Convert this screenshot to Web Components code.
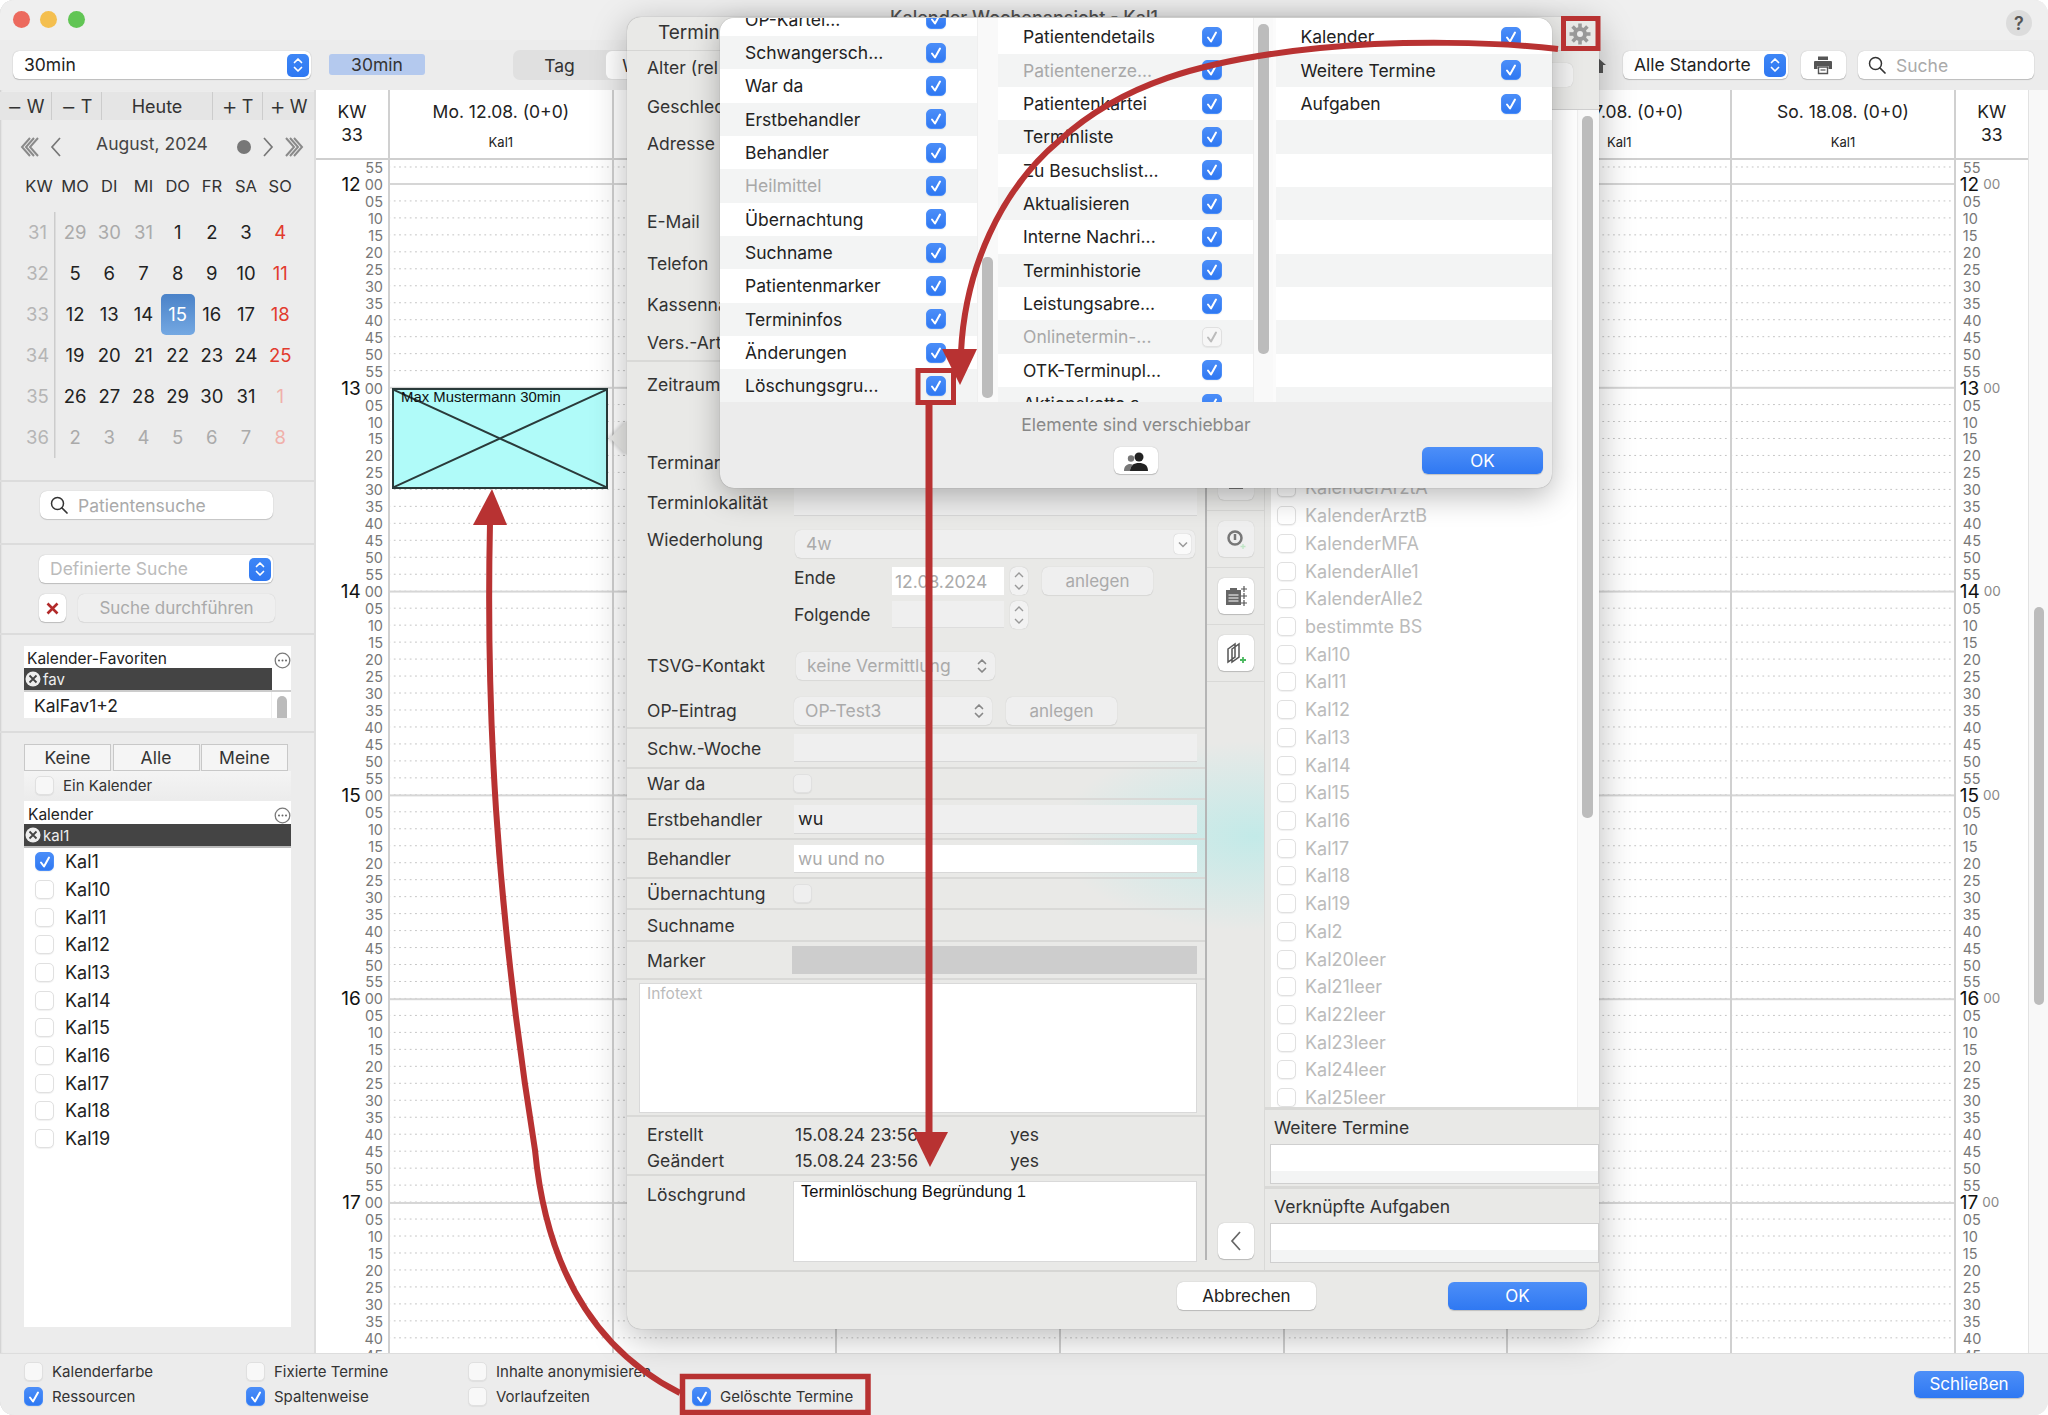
<!DOCTYPE html>
<html lang="de"><head><meta charset="utf-8"><title>Kalender Wochenansicht - Kal1</title>
<style>html,body{margin:0;padding:0;background:#fff}body{font-family:Inter,"Liberation Sans",sans-serif;color:#222;width:2048px;height:1415px;overflow:hidden}</style>
</head><body><app-window></app-window>
<script>
function define(name,css,render){customElements.define(name,class extends HTMLElement{connectedCallback(){if(this.shadowRoot)return;const r=this.attachShadow({mode:'open'});r.innerHTML='<style>'+css+'</style>'+render(this)}})}
const tick=c=>`<svg width="14" height="14" viewBox="0 0 14 14"><path d="M3 7.5 6 11.5 11 2.5" fill="none" stroke="${c}" stroke-width="2" stroke-linecap="round" stroke-linejoin="round"/></svg>`;
const stepperIcon=(c)=>`<svg width="12" height="18" viewBox="0 0 12 18"><path d="M2.5 6.5 6 3l3.5 3.5M2.5 11.5 6 15l3.5-3.5" fill="none" stroke="${c}" stroke-width="1.7" stroke-linecap="round" stroke-linejoin="round"/></svg>`;
const mag=`<svg width="20" height="20" viewBox="0 0 20 20"><circle cx="8.5" cy="8.5" r="6" fill="none" stroke="#333" stroke-width="1.5"/><path d="M13 13l5 5" stroke="#333" stroke-width="1.7" stroke-linecap="round"/></svg>`;
const ell=`<svg width="17" height="17" viewBox="0 0 17 17" style="align-self:flex-start;margin-top:6px"><circle cx="8.5" cy="8.5" r="7.3" fill="#fff" stroke="#7a7a7a" stroke-width="1.3"/><circle cx="5" cy="8.5" r="1" fill="#666"/><circle cx="8.5" cy="8.5" r="1" fill="#666"/><circle cx="12" cy="8.5" r="1" fill="#666"/></svg>`;
const xc=`<svg width="16" height="16" viewBox="0 0 16 16"><circle cx="8" cy="8" r="7.5" fill="#eee"/><path d="M4.500 4.500l7 7M11.500 4.500l-7 7" stroke="#444" stroke-width="1.8"/></svg>`;

define('ui-check',`:host{display:inline-flex;align-items:center;gap:var(--gap,11px);font-size:var(--fs,18px);color:inherit}
.b{width:var(--s,19px);height:var(--s,19px);box-sizing:border-box;border-radius:5px;background:var(--cb,#fff);border:1px solid #e0e0e0;box-shadow:0 1px 1px rgba(0,0,0,.06);flex:none;display:flex;align-items:center;justify-content:center}
:host([on]) .b{background:linear-gradient(#4a8df8,#2f78f2);border-color:#4a8df8}
:host([grey]) .b{background:#f6f6f6}`,h=>`<span class="b" part="box">${h.hasAttribute('on')?tick('#fff'):h.hasAttribute('grey')?tick('#bbb'):''}</span><slot></slot>`);

define('ui-btn',`:host{display:inline-flex;align-items:center;justify-content:center;box-sizing:border-box;height:28px;border-radius:6px;background:#fff;box-shadow:0 0 1px rgba(0,0,0,.3),0 1px 1px rgba(0,0,0,.18);font-size:17px;color:#222;flex:none}
:host([primary]){background:linear-gradient(#4d8ff8,#2f78f2);color:#fff;box-shadow:0 1px 1px rgba(0,0,0,.18)}
:host([dim]){background:#efefef;color:#aaa;box-shadow:0 0 1px rgba(0,0,0,.18),0 1px 1px rgba(0,0,0,.06)}`,()=>`<slot></slot>`);

define('ui-select',`:host{display:flex;align-items:center;box-sizing:border-box;height:28px;border-radius:6px;background:#fff;box-shadow:0 0 1px rgba(0,0,0,.3),0 1px 1px rgba(0,0,0,.18);font-size:17.5px;color:#222;padding:0 2px 0 11px;flex:none}
:host([dim]){background:#efefef;color:#aaa;box-shadow:0 0 1px rgba(0,0,0,.15),0 1px 1px rgba(0,0,0,.06)}
:host([ghost]){background:#fff;color:#bbb}
.t{flex:1;white-space:nowrap;overflow:hidden;padding-bottom:1px}
.s{width:22px;height:23px;border-radius:5px;background:linear-gradient(#3d86f6,#2f78f2);display:flex;align-items:center;justify-content:center}
.g{width:22px;height:23px;display:flex;align-items:center;justify-content:center}
.c{width:17px;height:20px;margin-right:2px;border-radius:4px;background:#fafafa;box-shadow:0 0 1px rgba(0,0,0,.3);display:flex;align-items:center;justify-content:center}`,
h=>{const k=h.getAttribute('kind');return `<span class="t"><slot></slot></span>`+(k==='blue'?`<span class="s">${stepperIcon('#fff')}</span>`:k==='gray'?`<span class="g">${stepperIcon('#888')}</span>`:k==='chev'?`<span class="c"><svg width="10" height="7" viewBox="0 0 10 7"><path d="M1 1.500 5 5.500l4-4" fill="none" stroke="#999" stroke-width="1.500"/></svg></span>`:'')});

define('ui-stepper',`:host{display:flex;flex-direction:column;width:18px;height:28px;border-radius:6px;background:#f2f2f2;box-shadow:0 0 1px rgba(0,0,0,.25);align-items:center;justify-content:center;flex:none}`,
()=>`<svg width="12" height="24" viewBox="0 0 12 24"><path d="M2 8 6 4l4 4M2 16l4 4 4-4" fill="none" stroke="#999" stroke-width="1.4"/></svg>`);

define('title-bar',`:host{display:grid;grid-template-columns:1fr auto 1fr;height:40px;background:#efefef}
.l{display:flex;gap:10.5px;padding:11px 0 0 12.5px}.d{width:17px;height:17px;border-radius:50%}
.tt{font-size:18px;font-weight:500;color:#555;line-height:36px}
.r{display:flex;justify-content:flex-end;padding:10px 16px 0 0}
.q{width:26px;height:26px;border-radius:50%;background:#dcdcdc;color:#555;font-size:18px;font-weight:600;display:flex;align-items:center;justify-content:center}`,
()=>`<div class="l"><span class="d" style="background:#ec6a5e"></span><span class="d" style="background:#f4bf4f"></span><span class="d" style="background:#61c554"></span></div><div class="tt">Kalender Wochenansicht - Kal1</div><div class="r"><span class="q">?</span></div>`);

define('tool-bar',`:host{display:flex;align-items:flex-start;height:50px;box-sizing:border-box;padding:11px 14px 0 13px;background:#ececec}
.chip{margin:3px 0 0 18px;width:96px;height:21px;border-radius:3px;background:#b4c9ee;font-size:17.5px;display:flex;align-items:center;justify-content:center;color:#333}
.seg{margin:-1px 0 0 88px;display:flex;height:30px;border-radius:7px;background:#e0e0e0;width:200px}
.seg span{width:93px;display:flex;align-items:center;justify-content:center;font-size:17.5px;color:#333}
.seg .w{background:#fff;border-radius:6px;margin:1px 0;width:90px}
.right{margin-left:auto;display:flex;align-items:flex-start;gap:12.5px}
.search{width:176px;height:28px;border-radius:6px;background:#fff;box-shadow:0 0 1px rgba(0,0,0,.3),0 1px 1px rgba(0,0,0,.18);display:flex;align-items:center;gap:9px;padding-left:9px;box-sizing:border-box;font-size:17.5px;color:#aaa}
.ic{width:45px;height:28px;border-radius:6px;background:#fff;box-shadow:0 0 1px rgba(0,0,0,.3),0 1px 1px rgba(0,0,0,.18);display:flex;align-items:center;justify-content:center}
.home{width:28px;height:28px;display:flex;align-items:center;justify-content:center}`,
()=>`<ui-select kind="blue" style="width:298px">30min</ui-select><div class="chip">30min</div><div class="seg"><span>Tag</span><span class="w">Woche</span></div>
<div class="right"><span class="home"><svg width="22" height="22" viewBox="0 0 22 22"><path d="M11 3 2 11h3v8h4v-5h4v5h4v-8h3z" fill="#555"/></svg></span>
<ui-select kind="blue" style="width:165px">Alle Standorte</ui-select>
<span class="ic"><svg width="20" height="20" viewBox="0 0 20 20"><path d="M5 1.500h10V5H5z" fill="#555"/><path d="M2 6h16a1 1 0 0 1 1 1v7h-3.500v-3h-11v3H1V7a1 1 0 0 1 1-1z" fill="#555"/><path d="M5.500 12h9v6.500h-9z" fill="#fff" stroke="#555" stroke-width="1.400"/><path d="M7.500 15h5" stroke="#555" stroke-width="1.200"/></svg></span>
<span class="search">${mag}<span>Suche</span></span></div>`);

define('mini-calendar',`:host{display:block}
.nav{display:flex;height:28px;margin-top:2px;background:#e5e5e5;font-size:18px;color:#333}
.nav span{display:flex;align-items:center;justify-content:center;gap:4px;border-right:1.5px solid #ccc;box-sizing:border-box}
.nav b{font-weight:300;font-size:25px;line-height:24px}
.mon{display:flex;height:45px;box-sizing:border-box;padding-top:9px;align-items:center}
.mon svg{display:block}
.mt{width:154px;padding-left:8px;text-align:center;font-size:17.5px;color:#444;margin-top:-8px}
.g{display:grid;grid-template-columns:38px repeat(7,34.2px);grid-template-rows:46.5px repeat(6,41px);margin-left:20px;width:278px;font-size:18.5px;text-align:center;
background:linear-gradient(#ccc,#ccc) 34px 47px/1.5px 246px no-repeat}
.g>span{display:flex;align-items:center;justify-content:center}
.hs{height:42px;grid-column:1/-1;display:grid;grid-template-columns:38px repeat(7,34.2px)}
.hs span{display:flex;align-items:center;justify-content:center;font-size:16.5px;color:#333}
.k{color:#b5b5b5;padding-right:3px}.o{color:#aaa}.s{color:#e23b2e}.so{color:#f0b0aa}
.t{background:linear-gradient(#4a82c8,#74a8e2);color:#fff;border-radius:5px}`,
()=>{const w=[['31',29,30,31,1,2,3,4],['32',5,6,7,8,9,10,11],['33',12,13,14,15,16,17,18],['34',19,20,21,22,23,24,25],['35',26,27,28,29,30,31,1],['36',2,3,4,5,6,7,8]];
let rows='';w.forEach((r,i)=>{r.forEach((d,j)=>{let c='';if(j===0)c='k';else if(i===0&&j<4||i===5&&j<7)c='o';else if(i===4&&j===7||i===5&&j===7)c='so';else if(j===7)c='s';if(d===15)c='t';rows+=`<span class="${c}">${d}</span>`})});
const dbl=d=>`<svg width="24" height="24" viewBox="0 0 24 24"><g fill="none" stroke="#8a8a8a" stroke-width="2">${d==='l'?'<path d="M11 3 3 12l8 9M15 3 7 12l8 9M19 3l-8 9 8 9"/>':'<path d="M5 3l8 9-8 9M9 3l8 9-8 9M13 3l8 9-8 9"/>'}</g></svg>`;
return `<div class="nav"><span style="width:52px"><b>−</b>W</span><span style="width:50px"><b>−</b>T</span><span style="width:111px">Heute</span><span style="width:50px"><b>+</b>T</span><span style="width:51px;border:0"><b>+</b>W</span></div>
<div class="mon"><span style="width:19px"></span>${dbl('l')}<span style="width:2px"></span><svg width="22" height="24" viewBox="0 0 22 24"><path d="M15 3l-8 9 8 9" fill="none" stroke="#777" stroke-width="1.7"/></svg><div class="mt">August, 2024</div><svg width="14" height="14" viewBox="0 0 14 14" style="margin-left:8px"><circle cx="7" cy="7" r="7" fill="#777"/></svg><span style="width:7px"></span><svg width="20" height="24" viewBox="0 0 20 24"><path d="M6 3l8 9-8 9" fill="none" stroke="#777" stroke-width="1.7"/></svg><span style="width:3px"></span>${dbl('r')}</div>
<div class="g"><div class="hs"><span>KW</span><span>MO</span><span>DI</span><span>MI</span><span>DO</span><span>FR</span><span>SA</span><span>SO</span></div>${rows}</div>`});

define('side-bar',`:host{display:block;width:316px;flex:none;box-sizing:border-box;border-right:2px solid #ddd;background:#ececec;box-shadow:inset 2px 0 2px -1px #ccc;overflow:hidden}
.sec{border-bottom:2px solid #dcdcdc}
.srch{margin:0 0 0 40px;width:233px;height:28px;border-radius:7px;background:#fff;box-shadow:0 0 1px rgba(0,0,0,.25),0 1px 1px rgba(0,0,0,.15);display:flex;align-items:center;gap:9px;padding-left:9px;box-sizing:border-box;color:#aaa;font-size:17.5px}
.row{display:flex;gap:12px;margin:11px 0 0 39px}
.box{margin:0 0 0 24px;width:267px;background:#fff;font-size:15.5px;position:relative}
.lbl{height:22px;display:flex;justify-content:space-between;align-items:flex-end;padding:0 0 0 3px;color:#222;line-height:19px}
.bar{height:22px;background:#444;color:#eee;display:flex;align-items:center;gap:2px;font-size:15px;padding-left:1px;box-sizing:border-box}
.btns{display:flex;gap:1.5px;margin:0 0 0 24px}
.btns span{width:87px;height:27px;box-sizing:border-box;border:1.5px solid #c8c8c8;background:#f5f5f5;display:flex;align-items:center;justify-content:center;font-size:17.5px;color:#333}
.ein{margin-left:24px;width:267px;height:28px;box-sizing:border-box;padding-left:11px;display:flex;align-items:center;background:linear-gradient(#f4f4f4,#ececec);color:#333}
.items{display:flex;flex-direction:column;padding:0 0 0 11px}
.items ui-check{height:27.67px}`,
()=>{const items=['Kal1','Kal10','Kal11','Kal12','Kal13','Kal14','Kal15','Kal16','Kal17','Kal18','Kal19'].map((k,i)=>`<ui-check ${i===0?'on':''}>${k}</ui-check>`).join('');
return `<div class="sec" style="height:390px;box-sizing:border-box;"><mini-calendar></mini-calendar></div>
<div class="sec" style="height:63px;box-sizing:border-box;padding-top:9px"><div class="srch">${mag}<span>Patientensuche</span></div></div>
<div class="sec" style="height:90px;box-sizing:border-box;padding-top:10px"><ui-select ghost kind="blue" style="margin-left:39px;width:234px">Definierte Suche</ui-select>
<div class="row"><ui-btn style="width:27px"><svg width="15" height="15" viewBox="0 0 15 15"><path d="M2.500 2.500l10 10M12.500 2.500l-10 10" stroke="#b22a2a" stroke-width="2.600"/></svg></ui-btn><ui-btn dim style="width:197px">Suche durchführen</ui-btn></div></div>
<div class="sec" style="height:98px;box-sizing:border-box;padding-top:11px"><div class="box">
<div class="lbl"><span>Kalender-Favoriten</span>${ell}</div><div class="bar" style="width:248px">${xc}<span>fav</span></div>
<div style="height:28px;border-top:2px solid #ccc;box-sizing:border-box;display:flex;font-size:17.5px;align-items:center"><span style="flex:1;padding-left:10px;border-right:1px solid #eee;align-self:stretch;display:flex;align-items:center">KalFav1+2</span><span style="width:19px;align-self:stretch;display:flex;justify-content:center;align-items:flex-end"><i style="width:10px;height:22px;border-radius:5px 5px 0 0;background:#bbb"></i></span></div></div></div>
<div style="height:11px"></div>
<div class="btns"><span>Keine</span><span>Alle</span><span>Meine</span></div>
<div class="ein"><ui-check style="--fs:15px;--gap:9px;--cb:#f7f7f7">Ein Kalender</ui-check></div>
<div style="height:2px"></div>
<div class="box" style="height:526px"><div class="lbl" style="height:23px;padding-left:4px"><span>Kalender</span>${ell}</div><div class="bar" style="height:24px;border-bottom:2px solid #bbb">${xc}<span>kal1</span></div><div class="items">${items}</div></div>`});

define('time-col',`:host{display:block;width:72px;flex:none;background:#fff;box-sizing:border-box}
.hd{border-bottom:2px solid #cfcfcf;display:flex;flex-direction:column;align-items:center;justify-content:center;font-size:17.5px;line-height:23px;color:#222;padding-bottom:3px;box-sizing:border-box;height:70px}
.bd{height:1194px;overflow:hidden;margin-top:-1px}
.r{height:16.98px;display:flex;align-items:center;font-size:14.5px;color:#777;justify-content:flex-end;padding-right:5px;line-height:17px}
.r b{font-weight:400;font-size:19px;color:#111;margin-right:4px}
:host([right]) .r{justify-content:flex-start;padding:0 0 0 7px}
:host([right]) .r.h{padding-left:4px}
:host([right]) .r.h span{font-size:13.5px;color:#888}`,
()=>{let s='<div class="r"><span>55</span></div>';for(let h=12;h<19;h++)for(let m=0;m<60;m+=5){const t=String(m).padStart(2,'0');s+=m===0?`<div class="r h"><b>${h}</b><span>${t}</span></div>`:`<div class="r"><span>${t}</span></div>`}
return `<div class="hd"><span>KW</span><span>33</span></div><div class="bd">${s}</div>`});

define('day-col',`:host{display:block;width:223.7px;flex:none;box-sizing:border-box;background:#fff;border-left:2px solid #d0d0d0}
.hd{height:70px;box-sizing:border-box;border-bottom:2px solid #cfcfcf;text-align:center;padding-top:11px}
.t{font-size:17.5px;color:#222;line-height:22px;white-space:nowrap}.k{font-size:13px;color:#222;margin-top:11px;line-height:16px}
.bd{position:relative;height:1194px;margin-top:-1px;
background:linear-gradient(#d6d6d6 2px,transparent 2px) 0 24px/100% 203.8px repeat-y,radial-gradient(circle,#c4c4c4 .7px,transparent 1px) 2px -.5px/5.33px 16.98px repeat}
::slotted(*){position:absolute;left:2px;top:229px}`,
h=>`<div class="hd"><div class="t">${h.getAttribute('label')}</div><div class="k">Kal1</div></div><div class="bd"><slot></slot></div>`);

define('cal-event',`:host{display:block;width:216px;height:101px;box-sizing:border-box;border:2px solid #2a3a3a;background:#b0fbf9;font:14.9px "Liberation Sans",sans-serif;color:#111}
.w{position:relative;width:100%;height:100%}
svg{position:absolute;left:0;top:0;width:100%;height:100%}
.t{position:relative;padding:0 0 0 7px;line-height:15px;white-space:nowrap}`,
()=>`<div class="w"><svg viewBox="0 0 212 97" preserveAspectRatio="none"><path d="M0 0 212 97M212 0 0 97" stroke="#2a3a3a" stroke-width="2"/></svg><div class="t">Max Mustermann 30min</div></div>`);

define('cal-view',`:host{display:flex;flex:1;min-width:0;overflow:hidden;background:#fff}
.sb{flex:1;background:#f8f8f8;border-left:1px solid #e2e2e2;padding:517px 0 0 5px;box-sizing:border-box}
.sb i{display:block;width:10px;height:398px;border-radius:5px;background:#bcbcbc}
.last{width:2px;background:#d0d0d0;flex:none}`,
()=>`<time-col></time-col><day-col label="Mo. 12.08. (0+0)"><cal-event></cal-event></day-col><day-col label="Di. 13.08. (0+0)"></day-col><day-col label="Mi. 14.08. (0+0)"></day-col><day-col label="Do. 15.08. (0+0)"></day-col><day-col label="Fr. 16.08. (0+0)"></day-col><day-col label="Sa. 17.08. (0+0)"></day-col><day-col label="So. 18.08. (0+0)"></day-col><div class="last"></div><time-col right></time-col><div class="sb"><i></i></div>`);

define('bottom-bar',`:host{display:grid;grid-template-columns:222px 222px 224px auto 1fr;grid-template-rows:25px 25px;padding:5px 24px 0 24px;height:62px;box-sizing:border-box;background:#ececec;font-size:15px;color:#333;--fs:15px;--gap:9px;--cb:#f8f8f8;border-top:1px solid #ddd}
ui-check{align-self:center}
.sch{grid-column:5;grid-row:1/3;justify-self:end;align-self:center}`,
()=>`<ui-check>Kalenderfarbe</ui-check><ui-check>Fixierte Termine</ui-check><ui-check>Inhalte anonymisieren</ui-check><span></span>
<ui-btn primary class="sch" style="width:110px;height:27px;font-size:17px;">Schließen</ui-btn>
<ui-check on>Ressourcen</ui-check><ui-check on>Spaltenweise</ui-check><ui-check>Vorlaufzeiten</ui-check><ui-check on>Gelöschte Termine</ui-check>`);

define('form-row',`:host{display:grid;grid-template-columns:147px 1fr;align-items:center;padding-left:20px;box-sizing:border-box;font-size:17.5px;color:#333}
:host([line]){border-bottom:2px solid #d9d9d7}
.l{white-space:nowrap;padding-bottom:var(--lo,0);padding-top:var(--lt,0)}.c{display:flex;align-items:center;min-width:0}`,
h=>`<div class="l">${h.getAttribute('label')||''}</div><div class="c"><slot></slot></div>`);

define('appt-dialog',`:host{position:absolute;left:627px;top:17px;width:972px;height:1312px;z-index:5;font-size:17.5px;color:#333}
.n{position:absolute;left:-12px;top:409px;width:24px;height:24px;background:#e9e9e7;transform:rotate(45deg);box-shadow:-2px 2px 3px rgba(0,0,0,.12)}
.p{position:relative;height:100%;background:#e9e9e7;border-radius:14px;box-shadow:0 0 1px rgba(0,0,0,.4),0 8px 36px rgba(0,0,0,.28);overflow:hidden;display:flex;flex-direction:column}
.title{height:34px;box-sizing:border-box;border-bottom:1.5px solid #d6d6d4;padding-left:31px;font-size:19px;line-height:32px;color:#333;flex:none}
.b{display:flex;flex:1;min-height:0}
.f{width:580px;flex:none;box-sizing:border-box;border-right:2px solid #b5b5b5;height:1209px;background:radial-gradient(ellipse 200px 95px at 627px 785px,rgba(188,234,232,.85),rgba(188,234,232,0))}
.fd{background:#efefef;height:28px;flex:1;margin-right:8px;box-sizing:border-box;border-bottom:1px solid #d8d8d8;display:flex;align-items:center;padding-left:12px;font-size:17.5px}
.w{background:#fff;color:#aaa}
.cb{--s:19px;--cb:#efefef}
.ic{width:58px;flex:none;display:flex;flex-direction:column;align-items:stretch;height:1219px;box-sizing:border-box;border-right:1.5px solid #d9d9d7;background:radial-gradient(ellipse 200px 95px at 47px 785px,rgba(188,234,232,.85),rgba(188,234,232,0))}
.ic div{height:57px;box-sizing:border-box;border-bottom:1.5px solid #d9d9d7;display:flex;align-items:center;justify-content:center}
.r{flex:1;min-width:0;display:flex;flex-direction:column}
.rt{height:59px;box-sizing:border-box;border-bottom:1.5px solid #cfcfcf;flex:none;display:flex;justify-content:flex-end;padding:12px 26px 0 0}
.rt i{width:40px;height:24px;border-radius:6px;background:#f2f2f2;box-shadow:0 0 1px rgba(0,0,0,.2)}
.lst{height:997px;display:flex;flex:none;overflow:hidden;padding-left:6px}
.lc{width:306px;flex:none;background:#fff;padding:364px 0 0 6px;box-sizing:border-box;color:#bbb;display:flex;flex-direction:column;--gap:9px;font-size:18px}
.lc ui-check{height:27.72px;flex:none}
.lb{flex:1;background:#f9f9f9;border-left:1px solid #eee;padding:6px 0 0 4px}
.lb i{display:block;width:11px;height:702px;background:#bcbcbc;border-radius:5px}
.sec{height:79px;box-sizing:border-box;border-top:3px solid #d9d9d7;flex:none}
.sec .t{height:34px;display:flex;align-items:center;padding-left:9px;font-size:17.5px;color:#333}
.sec .tb{height:40px;margin-left:5px;box-sizing:border-box;border:1.5px solid #cfcfcf;background:linear-gradient(#fff 26px,#f3f4f4 26px)}
.ft{height:59px;flex:none;border-top:2px solid #d6d6d4;box-sizing:border-box;display:flex;justify-content:flex-end;gap:132px;padding:10px 12px 0 0}
.ft ui-btn{width:139px}
.txt{margin:0 8px 0 12px;height:130px;background:#fff;border:1.5px solid #d9d9d9;box-sizing:border-box;padding:0 0 0 7px;font-size:15.5px;color:#bbb;line-height:20px}`,
()=>{const list=['KalenderArztA','KalenderArztB','KalenderMFA','KalenderAlle1','KalenderAlle2','bestimmte BS','Kal10','Kal11','Kal12','Kal13','Kal14','Kal15','Kal16','Kal17','Kal18','Kal19','Kal2','Kal20leer','Kal21leer','Kal22leer','Kal23leer','Kal24leer','Kal25leer'].map(k=>`<ui-check>${k}</ui-check>`).join('');
const R=(label,h,content='',extra='')=>`<form-row label="${label}" style="height:${h}px;${extra}">${content}</form-row>`;
const S=h=>`<div style="height:${h}px"></div>`;
const L=(label,h,content='',extra='')=>`<form-row line label="${label}" style="height:${h}px;${extra}">${content}</form-row>`;
const inp=(t,cl='',st='')=>`<span class="fd ${cl}" style="${st}">${t}</span>`;
return `<div class="n"></div><div class="p"><div class="title">Termin</div><div class="b"><div class="f">
${R('Alter (rel',33)}${R('Geschlecht',44)}${R('Adresse',30)}${S(42)}${R('E-Mail',42)}${R('Telefon',42)}${R('Kassenname',40)}${L('Vers.-Art',38,'')}
${R('Zeitraum',44)}${S(41)}${R('Terminart',30)}${S(10)}
${R('Terminlokalität',30,inp(''))}${S(8)}
${R('Wiederholung',38,`<ui-select dim kind="chev" style="width:400px;margin-left:1px">4w</ui-select>`,'--lo:10px')}
${R('',34,`<span style="width:98px;padding-bottom:6px">Ende</span><span style="width:112px;height:28px;background:#fff;color:#aaa;display:flex;align-items:center;padding-left:3px;box-sizing:border-box;margin-top:2px">12.08.2024</span><ui-stepper style="margin:2px 0 0 6px"></ui-stepper><ui-btn dim style="width:111px;margin:2px 0 0 14px">anlegen</ui-btn>`)}
${R('',35,`<span style="width:98px">Folgende</span><span style="width:112px;height:27px;background:#efefef;border-bottom:1px solid #ddd;box-sizing:border-box"></span><ui-stepper style="margin:0 0 0 6px"></ui-stepper>`)}
${S(19)}${R('TSVG-Kontakt',29,`<ui-select dim kind="gray" style="width:199px;margin-left:2px">keine Vermittlung</ui-select>`)}${S(16)}
${R('OP-Eintrag',29,`<ui-select dim kind="gray" style="width:198px;">OP-Test3</ui-select><ui-btn dim style="width:111px;margin-left:14px">anlegen</ui-btn>`)}${S(2)}
<div style="height:2px;background:#d9d9d7"></div>
${L('Schw.-Woche',40,inp('','',''))}
${L('War da',31,`<ui-check class="cb" style="margin-left:-1px"></ui-check>`)}
${L('Erstbehandler',40,inp('wu','','color:#222;font-size:18px;height:29px;padding-left:4px'))}
${L('Behandler',39,inp('wu und no','w','height:28px;padding-left:4px'))}
${L('Übernachtung',31,`<ui-check class="cb" style="margin-left:-1px"></ui-check>`)}
${L('Suchname',32)}
${L('Marker',38,`<span style="flex:1;height:28px;background:#cdcdcd;margin:0 8px 0 -2px"></span>`)}
<div style="height:137px;box-sizing:border-box;border-bottom:2px solid #d9d9d7;padding-top:3px"><div class="txt">Infotext</div></div>
<div style="height:59px;box-sizing:border-box;border-bottom:2px solid #d9d9d7;padding-top:4px">
${R('Erstellt',26,`<span style="width:215px;margin-left:1px">15.08.24 23:56</span><span>yes</span>`)}${R('Geändert',26,`<span style="width:215px;margin-left:1px">15.08.24 23:56</span><span>yes</span>`)}</div>
<form-row label="Löschgrund" style="height:86px;align-items:start;padding-top:5px;--lt:3px"><span style="flex:1;height:81px;margin:0 8px 0 -1px;background:#fff;border:1.5px solid #d9d9d9;box-sizing:border-box;padding-left:7px;font:16.6px/20px 'Liberation Sans',sans-serif;color:#111">Terminlöschung Begründung 1</span></form-row>
</div>
<div class="ic">
<div style="height:403px"></div>
<div><ui-btn dim style="width:36px;height:36px"><svg width="22" height="22" viewBox="0 0 22 22"><rect x="4" y="4" width="14" height="14" fill="#777"/></svg></ui-btn></div>
<div><ui-btn dim style="width:36px;height:36px"><svg width="24" height="24" viewBox="0 0 24 24"><circle cx="11" cy="11" r="6.500" fill="none" stroke="#777" stroke-width="2.500"/><path d="M11 7v6" stroke="#777" stroke-width="2.500"/><path d="M19 17v5M16.500 19.500h5" stroke="#bfe5c5" stroke-width="1.300"/></svg></ui-btn></div>
<div><ui-btn style="width:36px;height:36px"><svg width="24" height="24" viewBox="0 0 24 24"><rect x="2" y="6" width="15" height="15" fill="#666"/><rect x="6" y="4" width="7" height="3" fill="#666"/><path d="M4.500 11h10M4.500 14h10M4.500 17h10" stroke="#fff" stroke-width="1"/><path d="M20 2v6M17 5h6M20 9v6M17 12h6M20 16v6M17 19h6" stroke="#555" stroke-width="1.200"/></svg></ui-btn></div>
<div><ui-btn style="width:36px;height:36px"><svg width="24" height="24" viewBox="0 0 24 24"><path d="M4 8 11 3v13l-7 5zM8 8l7-5v13l-7 5z" fill="#fff" stroke="#555" stroke-width="1.500"/><path d="M19 16v6M16 19h6" stroke="#49b85e" stroke-width="1.800"/></svg></ui-btn></div>
<div style="flex:1;border:0;align-items:flex-end;padding-bottom:11px"><ui-btn style="width:36px;height:36px"><svg width="14" height="22" viewBox="0 0 14 22"><path d="M11 2 3 11l8 9" fill="none" stroke="#666" stroke-width="1.700"/></svg></ui-btn></div>
</div>
<div class="r"><div class="rt"><i></i></div>
<div class="lst"><div class="lc">${list}</div><div class="lb"><i></i></div></div>
<div class="sec"><div class="t">Weitere Termine</div><div class="tb"></div></div>
<div class="sec" style="height:82px"><div class="t">Verknüpfte Aufgaben</div><div class="tb"></div></div></div>
</div>
<div class="ft"><ui-btn>Abbrechen</ui-btn><ui-btn primary>OK</ui-btn></div></div>`});

define('settings-pop',`:host{position:absolute;left:720px;top:18px;width:832px;height:470px;z-index:6;background:#ececec;border-radius:14px;box-shadow:0 0 1px rgba(0,0,0,.4),0 8px 30px rgba(0,0,0,.28);overflow:hidden;display:flex;flex-direction:column;color:#222;font-size:17.5px}
.t{height:384px;display:flex;flex:none;background:#fff;overflow:hidden}
.c{flex:none;display:flex;flex-direction:column}
.rw{height:33.33px;flex:none;box-sizing:border-box;display:flex;align-items:center;justify-content:space-between;white-space:nowrap;padding:0 31px 0 25px}
.rw:nth-child(even){background:#f3f4f4}
.dim{color:#a8a8a8}
.st{flex:none;background:#f9f9f9;border-left:1px solid #efefef;box-sizing:border-box}
.st i{display:block;background:#bcbcbc;border-radius:5px}
.bt{flex:1;display:grid;grid-template-columns:1fr 44px 1fr;grid-template-rows:45px 27px;color:#888;font-size:17.5px}
.bt .m{grid-column:1/-1;display:flex;align-items:center;justify-content:center}
.bt .o{display:flex;justify-content:flex-end;padding-right:9px}`,
()=>{const row=(t,cl='',ck='on')=>`<div class="rw ${cl}"><span>${t}</span><ui-check style="--s:20px;" ${ck}></ui-check></div>`;
const c1=['OP-Kartei...','Schwangersch...','War da','Erstbehandler','Behandler','Heilmittel','Übernachtung','Suchname','Patientenmarker','Termininfos','Änderungen','Löschungsgru...'].map(t=>row(t,t==='Heilmittel'?'dim':'')).join('');
const c2=['Patientendetails','Patientenerze...','Patientenkartei','Terminliste','Zu Besuchslist...','Aktualisieren','Interne Nachri...','Terminhistorie','Leistungsabre...','Onlinetermin-...','OTK-Terminupl...','Aktionskette a...'].map(t=>row(t,t.startsWith('Online')||t==='Patientenerze...'?'dim':'',t.startsWith('Online')?'grey':'on')).join('');
const c3=['Kalender','Weitere Termine','Aufgaben'].map(t=>row(t)).join('')+Array(9).fill('<div class="rw"></div>').join('');
return `<div class="t"><div class="c" style="width:257px;margin-top:-15.33px">${c1}</div>
<div class="st" style="width:21px;padding:239px 0 0 4px"><i style="width:11px;height:141px"></i></div>
<div class="c" style="width:254.5px;margin-top:2.3px;">${c2}</div>
<div class="st" style="width:20px;padding:6px 0 0 4px"><i style="width:11px;height:330px"></i></div>
<div style="width:3px;flex:none;background:#fbfbfb"></div>
<div class="c" style="flex:1;margin-top:2.3px">${c3}</div></div>
<div class="bt"><div class="m">Elemente sind verschiebbar</div><div></div><ui-btn style="height:27px;width:44px"><svg width="26" height="22" viewBox="0 0 26 22"><circle cx="16" cy="7" r="4.500" fill="#222"/><path d="M7 21c0-6 4-8 9-8s9 2 9 8z" fill="#222"/><circle cx="8" cy="8.500" r="3.200" fill="#777"/><path d="M1 21c0-5 3-7 6-7 1 0 2 .2 3 1-2 1.500-3 3.500-3 6z" fill="#777"/></svg></ui-btn><div class="o"><ui-btn primary style="width:121px;height:27px">OK</ui-btn></div></div>`});

define('note-layer',`:host{position:absolute;left:0;top:0;width:2048px;height:1415px;z-index:10;pointer-events:none}svg{position:absolute;left:0;top:0}`,
()=>`<svg width="2048" height="1415" viewBox="0 0 2048 1415" fill="none"><g stroke="#b83232">
<path d="M1558 49C1500 42 1400 40 1320 48 1200 60 1120 85 1060 140 1000 190 965 270 961 352" stroke-width="6"/>
<path d="M929 405V1136" stroke-width="7"/>
<path d="M490 523C486 700 495 900 535 1150 545 1255 585 1345 680 1393" stroke-width="6"/>
<rect x="1563.500" y="18.500" width="34.500" height="30" stroke-width="5"/>
<rect x="918" y="370.500" width="35.500" height="32" stroke-width="5"/>
<rect x="682.500" y="1376.500" width="185.500" height="36" stroke-width="5.500"/></g>
<g fill="#b83232"><path d="M942 349h35l-17 36z"/><path d="M913 1132h35l-18 35z"/><path d="M473 525 492 489l15 36z"/></g>
<g transform="translate(1580 34)"><g fill="#999"><circle r="7"/><rect x="-1.800" y="-10.500" width="3.600" height="21"/><rect x="-1.800" y="-10.500" width="3.600" height="21" transform="rotate(45)"/><rect x="-1.800" y="-10.500" width="3.600" height="21" transform="rotate(90)"/><rect x="-1.800" y="-10.500" width="3.600" height="21" transform="rotate(135)"/></g><circle r="3" fill="#ececec"/></g></svg>`);

define('app-window',`:host{display:flex;flex-direction:column;position:relative;width:2048px;height:1415px;border-radius:14px;overflow:hidden;background:#ececec;box-shadow:inset 1px 0 1px #c8c8c8}
.m{display:flex;height:1263px;flex:none}`,
()=>`<title-bar></title-bar><tool-bar></tool-bar><div class="m"><side-bar></side-bar><cal-view></cal-view></div><bottom-bar></bottom-bar><appt-dialog></appt-dialog><settings-pop></settings-pop><note-layer></note-layer>`);
</script></body></html>
